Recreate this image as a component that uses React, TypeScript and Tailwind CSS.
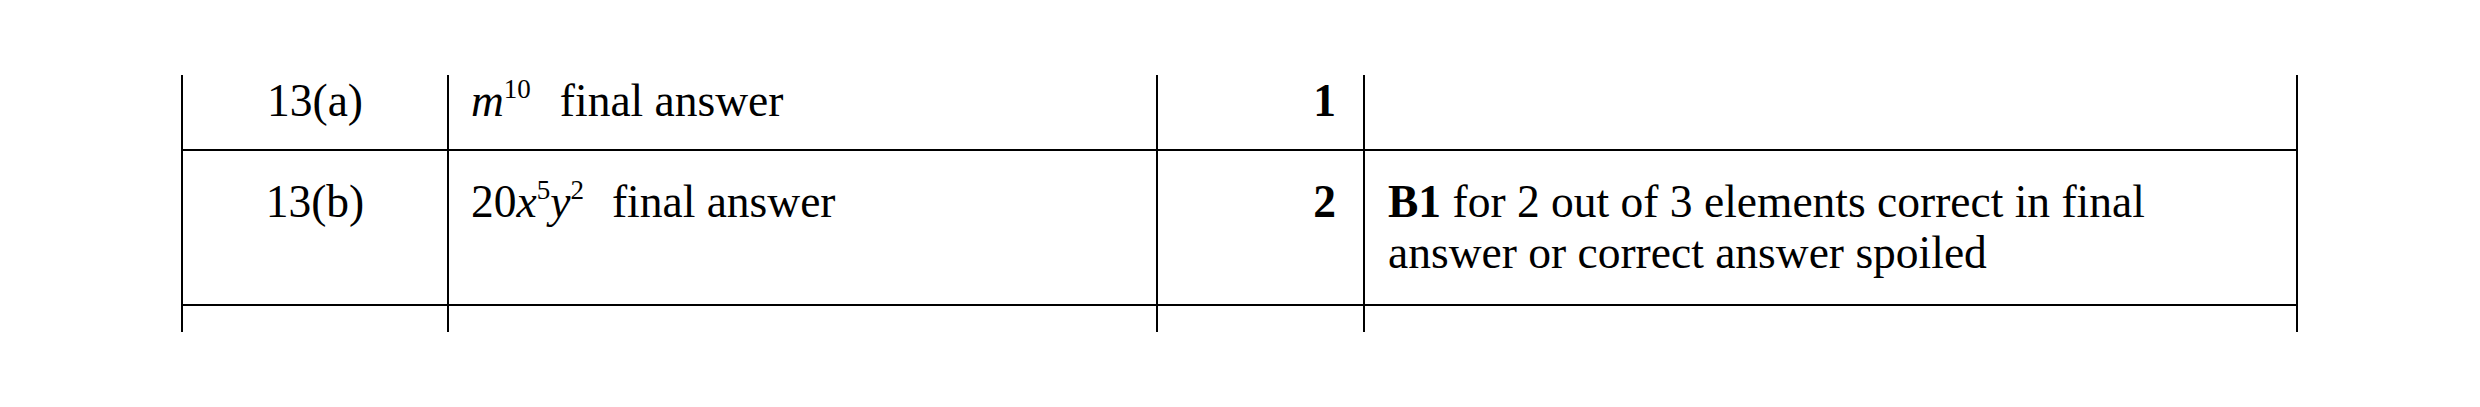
import React from 'react'

const serif = { fontFamily: '"Liberation Serif", "Times New Roman", serif' }

function Sup({ children }: { children: React.ReactNode }) {
  return <span className="relative -top-[18px] text-[27px] leading-none">{children}</span>
}

export default function App() {
  return (
    <div className="w-[2480px] h-[407px] bg-white text-black pt-[75px] pl-[181px]" style={serif}>
      <div className="w-[2117px] text-[45.5px] leading-[51px]">
        {/* 13(a) */}
        <div className="flex h-[74px]">
          <div className="w-[266px] border-l-2 border-black text-center">13(a)</div>
          <div className="w-[709px] border-l-2 border-black pl-[22px]">
            <span className="italic">m</span>
            <Sup>10</Sup>
            <span className="ml-[29px]">final answer</span>
          </div>
          <div className="w-[207px] border-l-2 border-black pr-[27px] text-right font-bold">1</div>
          <div className="w-[935px] border-x-2 border-black" />
        </div>

        {/* 13(b) */}
        <div className="flex h-[157px] border-y-2 border-black">
          <div className="w-[266px] border-l-2 border-black text-center pt-[25px]">13(b)</div>
          <div className="w-[709px] border-l-2 border-black pl-[22px] pt-[25px]">
            <span>20</span>
            <span className="italic">x</span>
            <Sup>5</Sup>
            <span className="italic">y</span>
            <Sup>2</Sup>
            <span className="ml-[28px]">final answer</span>
          </div>
          <div className="w-[207px] border-l-2 border-black pr-[27px] text-right font-bold pt-[25px]">2</div>
          <div className="w-[935px] border-x-2 border-black pl-[23px] pr-[40px] pt-[25px]">
            <span className="font-bold">B1</span> for 2 out of 3 elements correct in final answer or correct answer spoiled
          </div>
        </div>

        {/* next row, cut off */}
        <div className="flex h-[26px]">
          <div className="w-[266px] border-l-2 border-black" />
          <div className="w-[709px] border-l-2 border-black" />
          <div className="w-[207px] border-l-2 border-black" />
          <div className="w-[935px] border-x-2 border-black" />
        </div>
      </div>
    </div>
  )
}
